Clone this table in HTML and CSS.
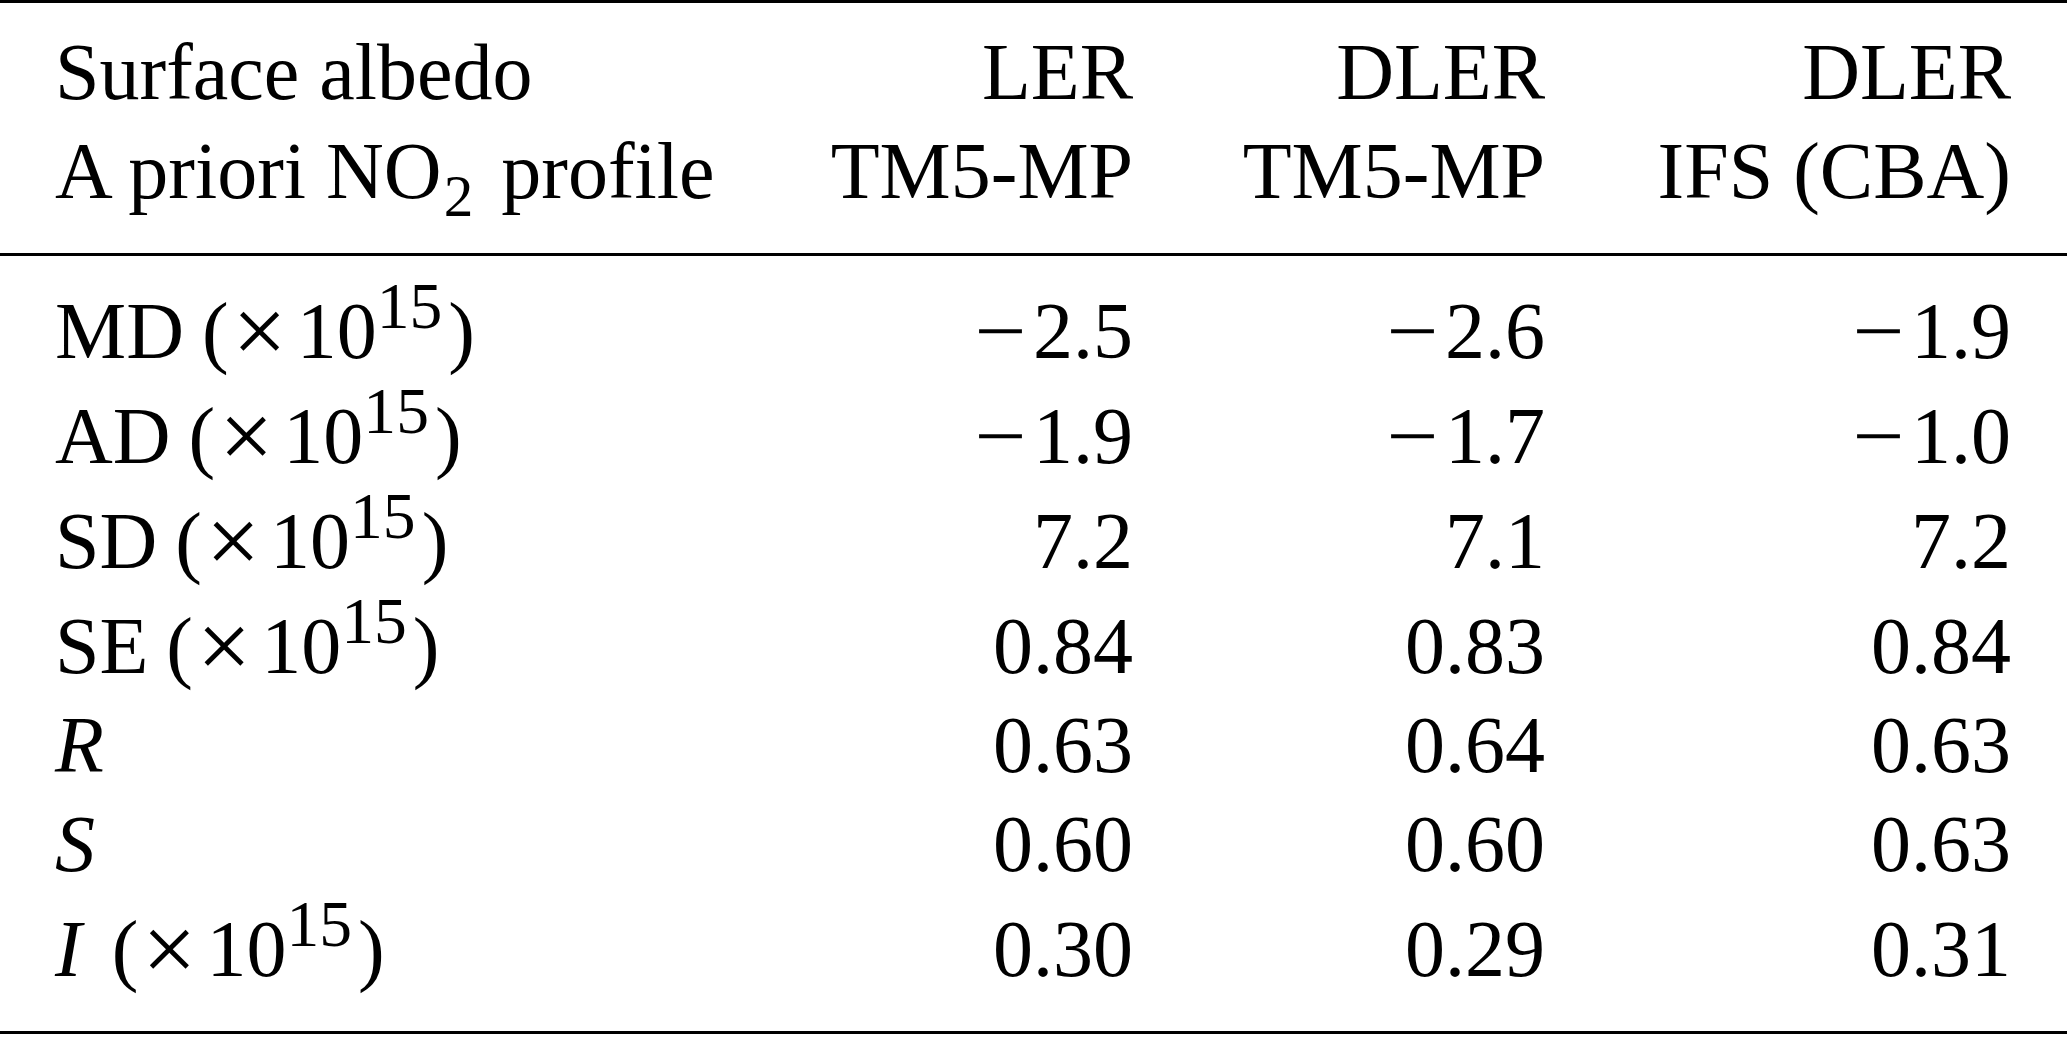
FILE: index.html
```html
<!DOCTYPE html>
<html lang="en">
<head>
<meta charset="utf-8">
<title>Table</title>
<link rel="stylesheet" href="styles.css">
</head>
<body>
<div class="table">
  <div class="head">
    <div class="grid line">
      <div class="cell left">Surface albedo</div>
      <div class="cell">LER</div>
      <div class="cell">DLER</div>
      <div class="cell">DLER</div>
    </div>
    <div class="grid line">
      <div class="cell left">A priori NO<span class="sub">2</span> profile</div>
      <div class="cell">TM5-MP</div>
      <div class="cell">TM5-MP</div>
      <div class="cell">IFS (CBA)</div>
    </div>
  </div>
  <div class="body">
    <div class="grid row tall">
      <div class="cell left">MD <span class="unit">(<span class="times">×</span>10<span class="sup">15</span>)</span></div>
      <div class="cell"><span class="minus">−</span>2.5</div>
      <div class="cell"><span class="minus">−</span>2.6</div>
      <div class="cell"><span class="minus">−</span>1.9</div>
    </div>
    <div class="grid row tall">
      <div class="cell left">AD <span class="unit">(<span class="times">×</span>10<span class="sup">15</span>)</span></div>
      <div class="cell"><span class="minus">−</span>1.9</div>
      <div class="cell"><span class="minus">−</span>1.7</div>
      <div class="cell"><span class="minus">−</span>1.0</div>
    </div>
    <div class="grid row tall">
      <div class="cell left">SD <span class="unit">(<span class="times">×</span>10<span class="sup">15</span>)</span></div>
      <div class="cell">7.2</div>
      <div class="cell">7.1</div>
      <div class="cell">7.2</div>
    </div>
    <div class="grid row tall">
      <div class="cell left">SE <span class="unit">(<span class="times">×</span>10<span class="sup">15</span>)</span></div>
      <div class="cell">0.84</div>
      <div class="cell">0.83</div>
      <div class="cell">0.84</div>
    </div>
    <div class="grid row">
      <div class="cell left"><i>R</i></div>
      <div class="cell">0.63</div>
      <div class="cell">0.64</div>
      <div class="cell">0.63</div>
    </div>
    <div class="grid row">
      <div class="cell left"><i>S</i></div>
      <div class="cell">0.60</div>
      <div class="cell">0.60</div>
      <div class="cell">0.63</div>
    </div>
    <div class="grid row tall">
      <div class="cell left"><i class="ivar">I</i> <span class="unit">(<span class="times">×</span>10<span class="sup">15</span>)</span></div>
      <div class="cell">0.30</div>
      <div class="cell">0.29</div>
      <div class="cell">0.31</div>
    </div>
  </div>
</div>
</body>
</html>
```

FILE: styles.css
```css
html, body {
  margin: 0;
  padding: 0;
  background: #ffffff;
}

body {
  width: 2067px;
  height: 1038px;
  overflow: hidden;
  color: #000000;
  font-family: "Liberation Serif", "Times New Roman", serif;
  font-size: 80px;
  line-height: 99px;
}

.table {
  border-top: 3px solid #000000;
  border-bottom: 3px solid #000000;
}

.head {
  padding: 19.5px 0 32.5px 0;
  border-bottom: 3px solid #000000;
}

.body {
  padding: 19.5px 0 32.5px 0;
}

.grid {
  display: grid;
  grid-template-columns: 715px 363px 412px 466px;
  padding: 0 56px 0 55px;
}

.line {
  height: 99px;
}

.row {
  height: 99px;
}

.row.tall {
  box-sizing: border-box;
  height: 105px;
  padding-top: 6px;
}

.cell {
  text-align: right;
  white-space: nowrap;
}

.cell.left {
  text-align: left;
}

.sub {
  font-size: 0.74em;
  line-height: 0;
  vertical-align: -18px;
  margin-left: 2px;
  margin-right: 8px;
}

.sup {
  font-size: 0.82em;
  line-height: 0;
  vertical-align: 30px;
  margin-right: 6px;
}

.unit {
  margin-left: -2px;
}

.times {
  font-size: 1.2em;
  line-height: 0;
  vertical-align: -5px;
  margin: 0 10px 0 4px;
}

.minus {
  display: inline-block;
  margin-right: 10px;
  transform: scaleX(1.15);
}

.ivar {
  margin-right: 12px;
}
```
